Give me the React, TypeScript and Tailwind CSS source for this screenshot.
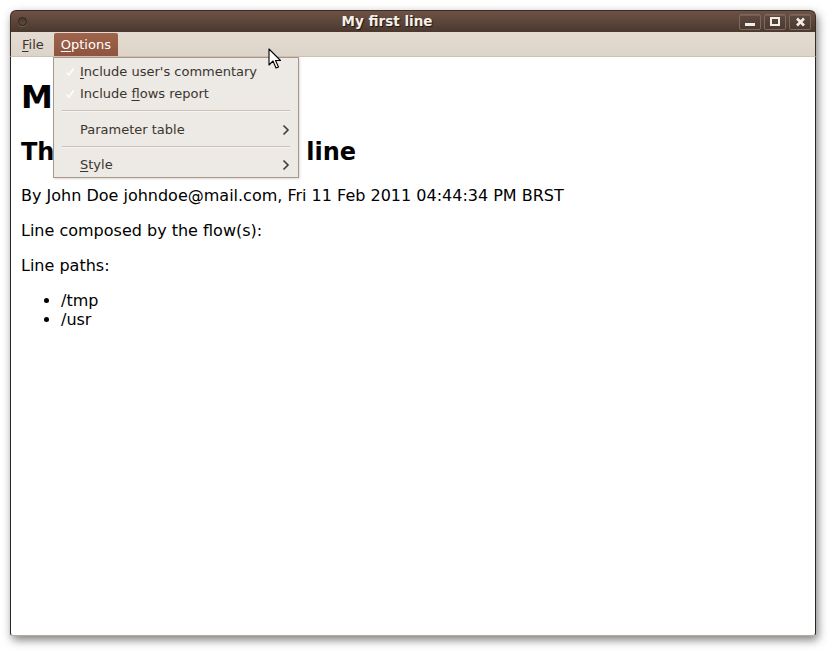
import React from "react";

const menuFont = "font-['DejaVu_Sans',sans-serif]";

function Chevron() {
  return (
    <svg width="8" height="12" viewBox="0 0 8 12" className="ml-auto mr-[8px]">
      <path d="M1.5 1.5 L6 6 L1.5 10.5" fill="none" stroke="#3c3c3c" strokeWidth="1.6" />
    </svg>
  );
}

function Check() {
  return (
    <svg width="10" height="10" viewBox="0 0 10 10" className="absolute left-[11px] top-1/2 -translate-y-1/2">
      <path d="M1.5 5.5 L4 8 L8.5 1.5" fill="none" stroke="#ffffff" strokeWidth="1.6" opacity="0.9" />
    </svg>
  );
}

function WinButton({ children }: { children: React.ReactNode }) {
  return (
    <div className="flex h-[16px] w-[22px] items-center justify-center rounded-[2px] border border-[#7d6a5e] bg-gradient-to-b from-[#5e493e] to-[#4b3a31] shadow-[inset_0_1px_0_rgba(255,255,255,0.12)]">
      {children}
    </div>
  );
}

export default function App() {
  return (
    <div className={`h-[653px] w-[833px] bg-white pl-[10px] pt-[10px] ${menuFont}`}>
      <div className="relative flex h-[626px] w-[806px] flex-col rounded-t-[6px] rounded-b-[3px] shadow-[2px_4px_10px_rgba(0,0,0,0.5)]">
        {/* title bar */}
        <div className="flex h-[22px] items-center rounded-t-[6px] border border-b-0 border-[#3a2c25] bg-gradient-to-b from-[#6e5244] to-[#4a3930] pl-[7px] pr-[4px]">
          <div className="h-[9px] w-[9px] rounded-full border border-[#2e241f] bg-gradient-to-b from-[#4a3a31] to-[#5d4a3f] shadow-[0_1px_0_rgba(255,255,255,0.15)]" />
          <div className="flex flex-1 justify-center pl-[8px]">
            <span className="text-[13.5px] font-bold text-[#f4efea] [text-shadow:1px_1px_1px_#1e1511]">My first line</span>
          </div>
          <div className="flex gap-[3px]">
            <WinButton>
              <div className="mt-[6px] h-[3px] w-[10px] bg-[#f1ece7]" />
            </WinButton>
            <WinButton>
              <div className="h-[9px] w-[10px] border-2 border-[#f1ece7]" />
            </WinButton>
            <WinButton>
              <svg width="11" height="10" viewBox="0 0 11 10">
                <path d="M2 1.5 L9 8.5 M9 1.5 L2 8.5" stroke="#f1ece7" strokeWidth="2.6" />
              </svg>
            </WinButton>
          </div>
        </div>

        {/* menubar */}
        <div className="flex h-[25px] items-end border-x border-b border-[#3a2c25] border-b-[#cdc2b5] bg-gradient-to-b from-[#e4dcd2] to-[#ddd4c9] pl-[1px] text-[13px] text-[#3a3531]">
          <div className="flex h-[23px] items-center px-[10px]">
            <span><u className="underline-offset-2">F</u>ile</span>
          </div>
          <div className="flex h-[23px] items-center rounded-t-[2px] bg-gradient-to-b from-[#a0644b] to-[#8e543f] px-[7px] text-white">
            <span><u className="underline-offset-2">O</u>ptions</span>
          </div>
        </div>

        {/* content */}
        <div className="flex-1 rounded-b-[3px] border-x border-b border-x-[#2b2622] border-b-[#b8a898] bg-white px-[10px] pt-0 font-['DejaVu_Sans',sans-serif] text-[16px] leading-[normal] text-black">
          <div className="pt-px" />
          <h1 className="mt-[20.44px] mb-[21.44px] text-[32px] font-bold">My first line</h1>
          <h2 className="mt-[21px] mb-[19.92px] text-[24px] font-bold">The flows of my first line</h2>
          <p className="my-[16px]">By John Doe johndoe@mail.com, Fri 11 Feb 2011 04:44:34 PM BRST</p>
          <p className="my-[16px]">Line composed by the flow(s):</p>
          <p className="my-[16px]">Line paths:</p>
          <ul className="my-[16px] list-disc pl-[40px]">
            <li>/tmp</li>
            <li>/usr</li>
          </ul>
        </div>

        {/* dropdown menu */}
        <div className="absolute left-[43px] top-[47px] w-[246px] border border-[#a99888] bg-[#ede9e4] pt-[3px] text-[13px] text-[#3a3531] shadow-[1px_1px_2px_rgba(0,0,0,0.15)]">
          <div className="relative flex h-[22px] items-center pl-[26px]">
            <Check />
            <span><u className="underline-offset-2">I</u>nclude user's commentary</span>
          </div>
          <div className="relative flex h-[22px] items-center pl-[26px]">
            <Check />
            <span>Include <u className="underline-offset-2">f</u>lows report</span>
          </div>
          <div className="flex h-[12px] items-center px-[8px]">
            <div className="h-[2px] w-full border-t border-b border-t-[#cbc1b6] border-b-[#f7f4f0]" />
          </div>
          <div className="flex h-[25px] items-center pl-[26px]">
            <span>Parameter table</span>
            <Chevron />
          </div>
          <div className="flex h-[10px] items-center px-[8px]">
            <div className="h-[2px] w-full border-t border-b border-t-[#cbc1b6] border-b-[#f7f4f0]" />
          </div>
          <div className="flex h-[25px] items-center pl-[26px]">
            <span><u className="underline-offset-2">S</u>tyle</span>
            <Chevron />
          </div>
        </div>

        {/* mouse pointer */}
        <svg width="14" height="22" viewBox="0 0 14 22" className="absolute left-[258px] top-[38px]">
          <path d="M1 1 L1 17 L5 13 L8 20 L10.5 19 L7.5 12.5 L12.5 12.5 Z" fill="#ffffff" stroke="#000000" strokeWidth="1.1" strokeLinejoin="round" />
        </svg>
      </div>
    </div>
  );
}
